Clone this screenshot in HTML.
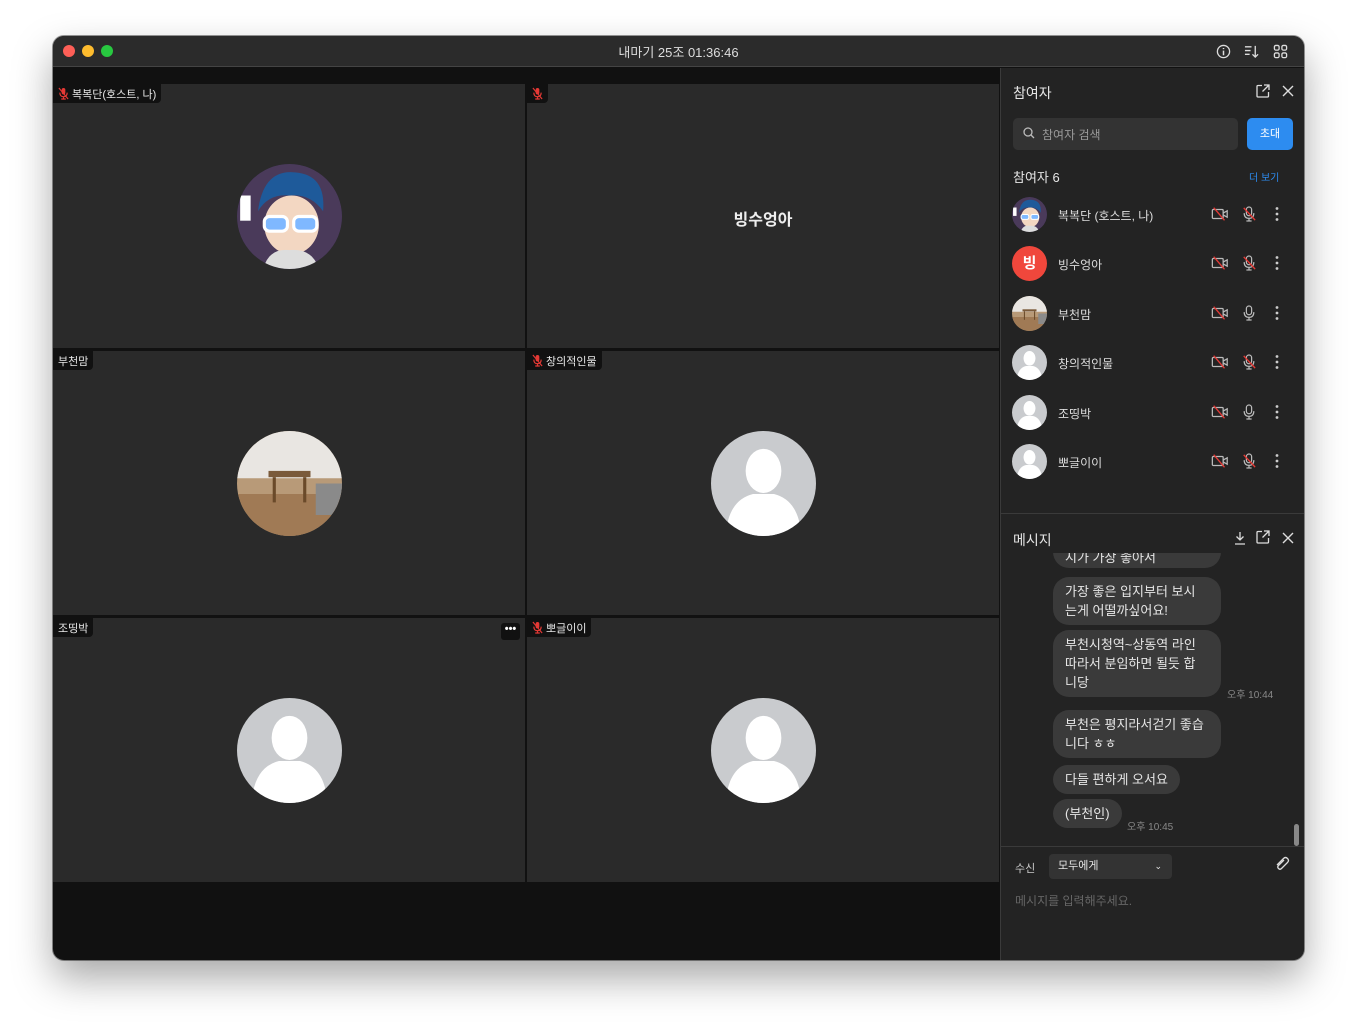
<!DOCTYPE html><html><head><meta charset="utf-8"><style>
*{margin:0;padding:0;box-sizing:border-box}
body{width:1357px;height:1030px;background:#fff;font-family:"Liberation Sans","Noto Sans CJK KR",sans-serif;position:relative;overflow:hidden}
.win{position:absolute;left:53px;top:36px;width:1251px;height:924px;border-radius:11px;background:#111;overflow:hidden;box-shadow:0 18px 40px rgba(0,0,0,.35),0 0 0 1px rgba(0,0,0,.4)}
.tb{position:absolute;left:0;top:0;width:100%;height:31px;background:#2b2b2b;border-bottom:1px solid #444}
.dot{position:absolute;top:9px;width:12px;height:12px;border-radius:50%}
.title{position:absolute;top:6px;left:0;width:100%;text-align:center;color:#ddd;font-size:13px}
.tile{position:absolute;background:#2a2a2a;width:472px;height:264px}
.lbl{position:absolute;left:0;top:0;background:#111;color:#e8e8e8;font-size:11px;padding:2px 5px;height:19px;border-radius:0 0 4px 0;display:flex;align-items:center;gap:3px}
.av{position:absolute;width:105px;height:105px;border-radius:50%;left:184px;top:80px;overflow:hidden}
.side{position:absolute;left:947px;top:32px;width:304px;height:892px;background:#232323;border-left:1px solid #3a3a3a}
.t{position:absolute;color:#e6e6e6}
.row{position:absolute;left:11px;width:285px;height:36px}
.row .a{position:absolute;left:0;top:0;width:35px;height:35px;border-radius:50%;overflow:hidden}
.row .n{position:absolute;left:46px;top:10px;font-size:12px;color:#ddd}
.row svg.ic{position:absolute;top:9px}
.bub{position:absolute;left:52px;background:#3a3a3a;color:#e6e6e6;font-size:13px;line-height:19px;border-radius:16px;padding:5px 12px}
.tm{position:absolute;color:#888;font-size:10px}
</style></head><body>
<svg width="0" height="0" style="position:absolute"><defs>
<symbol id="def" viewBox="0 0 100 100"><rect width="100" height="100" fill="#c9cbce"/><ellipse cx="50" cy="38" rx="17" ry="21" fill="#fff"/><path d="M14 100 Q16 66 40 60 L60 60 Q84 66 86 100Z" fill="#fff"/></symbol>
<symbol id="cam" viewBox="0 0 20 16"><rect x="1.5" y="3" width="12" height="10" rx="1" fill="none" stroke="#bbb" stroke-width="1.4"/><path d="M13.5 7 L18 4.5 V11.5 L13.5 9" fill="none" stroke="#bbb" stroke-width="1.4"/><path d="M3 1 L15 15" stroke="#e53935" stroke-width="1.5"/></symbol>
<symbol id="mic" viewBox="0 0 16 18"><rect x="5" y="1" width="6" height="10" rx="3" fill="none" stroke="#bbb" stroke-width="1.4"/><path d="M2.5 8 Q2.5 14 8 14 Q13.5 14 13.5 8 M8 14 V17 M5 17 H11" fill="none" stroke="#bbb" stroke-width="1.4"/></symbol>
<symbol id="micx" viewBox="0 0 16 18"><use href="#mic"/><path d="M2 2 L15 16" stroke="#e53935" stroke-width="1.5"/></symbol>
<symbol id="rmic" viewBox="0 0 12 14"><rect x="4" y="1" width="4" height="7" rx="2" fill="#e53935"/><path d="M2 6 Q2 10.5 6 10.5 Q10 10.5 10 6 M6 10.5 V13 M3.5 13 H8.5" fill="none" stroke="#e53935" stroke-width="1.3"/><path d="M1 1 L11 13" stroke="#e53935" stroke-width="1.3"/></symbol>
<symbol id="dots" viewBox="0 0 6 16"><circle cx="3" cy="2.5" r="1.4" fill="#ccc"/><circle cx="3" cy="8" r="1.4" fill="#ccc"/><circle cx="3" cy="13.5" r="1.4" fill="#ccc"/></symbol>
<symbol id="me" viewBox="0 0 100 100"><rect width="100" height="100" fill="#3b3050"/><circle cx="50" cy="50" r="50" fill="#4a3a5a"/><path d="M20 45 Q25 5 55 8 Q85 10 82 45 Q70 28 50 30 Q30 28 20 45Z" fill="#1e5a9a"/><ellipse cx="52" cy="58" rx="26" ry="28" fill="#f3d7c2"/><rect x="26" y="50" width="22" height="14" rx="5" fill="#7fb8ff" stroke="#fff" stroke-width="3"/><rect x="54" y="50" width="22" height="14" rx="5" fill="#7fb8ff" stroke="#fff" stroke-width="3"/><path d="M25 100 Q30 80 50 82 Q72 80 78 100Z" fill="#ddd"/><rect x="3" y="30" width="10" height="24" fill="#fff"/></symbol>
<symbol id="room" viewBox="0 0 100 100"><rect width="100" height="100" fill="#b89a78"/><rect width="100" height="45" fill="#e9e6e2"/><rect x="0" y="60" width="100" height="40" fill="#a07a55"/><rect x="30" y="38" width="40" height="6" fill="#7a5a3a"/><rect x="34" y="44" width="3" height="24" fill="#6a4a2a"/><rect x="63" y="44" width="3" height="24" fill="#6a4a2a"/><rect x="75" y="50" width="25" height="30" fill="#8a8a8a"/></symbol>
</defs></svg>
<div class="win">
<div class="tb"><div class="dot" style="left:10px;background:#fe5f57"></div><div class="dot" style="left:29px;background:#febc2e"></div><div class="dot" style="left:48px;background:#28c840"></div>
<div class="title">내마기 25조 01:36:46</div>
<svg style="position:absolute;left:1163px;top:8px" width="15" height="15" viewBox="0 0 16 16"><circle cx="8" cy="8" r="6.5" fill="none" stroke="#ddd" stroke-width="1.4"/><path d="M8 7 V12 M8 4.2 V5.4" stroke="#ddd" stroke-width="1.6"/></svg>
<svg style="position:absolute;left:1191px;top:8px" width="15" height="15" viewBox="0 0 16 16"><path d="M1 3 H8 M1 7 H7 M1 11 H6 M12 2 V14 M9 11 L12 14 L15 11" fill="none" stroke="#ddd" stroke-width="1.4"/></svg>
<svg style="position:absolute;left:1220px;top:8px" width="15" height="15" viewBox="0 0 16 16"><g fill="none" stroke="#ddd" stroke-width="1.4"><rect x="1.5" y="1.5" width="5" height="5" rx="1.5"/><rect x="9.5" y="1.5" width="5" height="5" rx="1.5"/><rect x="1.5" y="9.5" width="5" height="5" rx="1.5"/><rect x="9.5" y="9.5" width="5" height="5" rx="1.5"/></g></svg>
</div>
<div class="tile" style="left:0;top:48px"><div class="lbl"><svg width="11" height="13"><use href="#rmic"/></svg>복복단(호스트, 나)</div><svg class="av" viewBox="0 0 100 100"><use href="#me"/></svg></div>
<div class="tile" style="left:474px;top:48px"><div class="lbl"><svg width="11" height="13"><use href="#rmic"/></svg></div><div style="position:absolute;left:0;width:100%;top:122px;text-align:center;color:#eee;font-size:16px;font-weight:bold">빙수엉아</div></div>
<div class="tile" style="left:0;top:315px"><div class="lbl">부천맘</div><svg class="av" viewBox="0 0 100 100"><use href="#room"/></svg></div>
<div class="tile" style="left:474px;top:315px"><div class="lbl"><svg width="11" height="13"><use href="#rmic"/></svg>창의적인물</div><svg class="av" viewBox="0 0 100 100"><use href="#def"/></svg></div>
<div class="tile" style="left:0;top:582px"><div class="lbl">조띵박</div><div style="position:absolute;left:448px;top:5px;width:19px;height:17px;background:#111;border-radius:3px;color:#fff;font-size:11px;text-align:center;line-height:12px;font-weight:bold">•••</div><svg class="av" viewBox="0 0 100 100"><use href="#def"/></svg></div>
<div class="tile" style="left:474px;top:582px"><div class="lbl"><svg width="11" height="13"><use href="#rmic"/></svg>뽀글이이</div><svg class="av" viewBox="0 0 100 100"><use href="#def"/></svg></div>
<div class="side">
<div class="t" style="left:12px;top:15px;font-size:14px">참여자</div>
<svg style="position:absolute;left:255px;top:16px" width="14" height="14" viewBox="0 0 14 14"><path d="M6 1.5 H2 Q1 1.5 1 2.5 V12 Q1 13 2 13 H11.5 Q12.5 13 12.5 12 V8 M8 1 H13 V6 M13 1 L6.5 7.5" fill="none" stroke="#ddd" stroke-width="1.3"/></svg>
<svg style="position:absolute;left:281px;top:17px" width="12" height="12"><path d="M1 1 L11 11 M11 1 L1 11" stroke="#ddd" stroke-width="1.4"/></svg>
<div style="position:absolute;left:12px;top:50px;width:225px;height:32px;background:#333;border-radius:5px"></div>
<svg style="position:absolute;left:22px;top:59px" width="12" height="12"><circle cx="5" cy="5" r="4" fill="none" stroke="#bbb" stroke-width="1.3"/><path d="M8 8 L11 11" stroke="#bbb" stroke-width="1.3"/></svg>
<div class="t" style="left:41px;top:58px;font-size:12px;color:#999">참여자 검색</div>
<div style="position:absolute;left:246px;top:50px;width:46px;height:32px;background:#2d8cf0;border-radius:5px;color:#fff;font-size:11px;text-align:center;line-height:32px">초대</div>
<div class="t" style="left:12px;top:99px;font-size:13px">참여자 6</div>
<div class="t" style="left:248px;top:101px;font-size:10px;color:#2d8cf0">더 보기</div>
<div class="row" style="top:129px"><svg class="a" viewBox="0 0 100 100"><use href="#me"/></svg><div class="n">복복단 (호스트, 나)</div><svg class="ic" style="left:199px" width="18" height="16"><use href="#cam"/></svg><svg class="ic" style="left:230px;top:8px" width="14" height="18"><use href="#micx"/></svg><svg class="ic" style="left:262px" width="6" height="16"><use href="#dots"/></svg></div>
<div class="row" style="top:178px"><div class="a" style="background:#f0473c;color:#fff;font-weight:bold;font-size:15px;text-align:center;line-height:35px">빙</div><div class="n">빙수엉아</div><svg class="ic" style="left:199px" width="18" height="16"><use href="#cam"/></svg><svg class="ic" style="left:230px;top:8px" width="14" height="18"><use href="#micx"/></svg><svg class="ic" style="left:262px" width="6" height="16"><use href="#dots"/></svg></div>
<div class="row" style="top:228px"><svg class="a" viewBox="0 0 100 100"><use href="#room"/></svg><div class="n">부천맘</div><svg class="ic" style="left:199px" width="18" height="16"><use href="#cam"/></svg><svg class="ic" style="left:230px;top:8px" width="14" height="18"><use href="#mic"/></svg><svg class="ic" style="left:262px" width="6" height="16"><use href="#dots"/></svg></div>
<div class="row" style="top:277px"><svg class="a" viewBox="0 0 100 100"><use href="#def"/></svg><div class="n">창의적인물</div><svg class="ic" style="left:199px" width="18" height="16"><use href="#cam"/></svg><svg class="ic" style="left:230px;top:8px" width="14" height="18"><use href="#micx"/></svg><svg class="ic" style="left:262px" width="6" height="16"><use href="#dots"/></svg></div>
<div class="row" style="top:327px"><svg class="a" viewBox="0 0 100 100"><use href="#def"/></svg><div class="n">조띵박</div><svg class="ic" style="left:199px" width="18" height="16"><use href="#cam"/></svg><svg class="ic" style="left:230px;top:8px" width="14" height="18"><use href="#mic"/></svg><svg class="ic" style="left:262px" width="6" height="16"><use href="#dots"/></svg></div>
<div class="row" style="top:376px"><svg class="a" viewBox="0 0 100 100"><use href="#def"/></svg><div class="n">뽀글이이</div><svg class="ic" style="left:199px" width="18" height="16"><use href="#cam"/></svg><svg class="ic" style="left:230px;top:8px" width="14" height="18"><use href="#micx"/></svg><svg class="ic" style="left:262px" width="6" height="16"><use href="#dots"/></svg></div>
<div style="position:absolute;left:0;top:445px;width:100%;height:1px;background:#3a3a3a"></div>
<div class="bub" style="top:464px;width:168px;height:36px;padding-top:16px">시가 가장 좋아서</div>
<div class="bub" style="top:509px;width:168px">가장 좋은 입지부터 보시<br>는게 어떨까싶어요!</div>
<div class="bub" style="top:562px;width:168px">부천시청역~상동역 라인<br>따라서 분임하면 될듯 합<br>니당</div>
<div class="tm" style="left:226px;top:618px">오후 10:44</div>
<div class="bub" style="top:642px;width:168px">부천은 평지라서걷기 좋습<br>니다 ㅎㅎ</div>
<div class="bub" style="top:697px">다들 편하게 오서요</div>
<div class="bub" style="top:731px">(부천인)</div>
<div class="tm" style="left:126px;top:750px">오후 10:45</div>
<div style="position:absolute;left:0;top:452px;width:100%;height:33px;background:#232323"></div>
<div class="t" style="left:12px;top:462px;font-size:14px">메시지</div>
<svg style="position:absolute;left:232px;top:463px" width="14" height="14"><path d="M7 1 V9 M3.5 5.5 L7 9 L10.5 5.5 M2 13 H12" fill="none" stroke="#ddd" stroke-width="1.3"/></svg>
<svg style="position:absolute;left:255px;top:462px" width="14" height="14" viewBox="0 0 14 14"><path d="M6 1.5 H2 Q1 1.5 1 2.5 V12 Q1 13 2 13 H11.5 Q12.5 13 12.5 12 V8 M8 1 H13 V6 M13 1 L6.5 7.5" fill="none" stroke="#ddd" stroke-width="1.3"/></svg>
<svg style="position:absolute;left:281px;top:464px" width="12" height="12"><path d="M1 1 L11 11 M11 1 L1 11" stroke="#ddd" stroke-width="1.4"/></svg>
<div style="position:absolute;left:293px;top:756px;width:5px;height:22px;background:#888;border-radius:3px"></div>
<div style="position:absolute;left:0;top:778px;width:100%;height:1px;background:#3a3a3a"></div>
<div class="t" style="left:14px;top:792px;font-size:11px;color:#ccc">수신</div>
<div style="position:absolute;left:48px;top:786px;width:123px;height:25px;background:#333;border-radius:4px;color:#e6e6e6;font-size:11px;line-height:25px;padding-left:9px">모두에게<span style="position:absolute;right:10px;font-size:9px">⌄</span></div>
<svg style="position:absolute;left:273px;top:788px" width="16" height="16" viewBox="0 0 16 16"><path d="M10 4 L4.5 9.5 Q3 11 4.5 12.5 Q6 14 7.5 12.5 L13.5 6.5 Q15.5 4.5 13.5 2.5 Q11.5 0.5 9.5 2.5 L3 9" fill="none" stroke="#ddd" stroke-width="1.3"/></svg>
<div class="t" style="left:14px;top:824px;font-size:12px;color:#666">메시지를 입력해주세요.</div>
</div>
</div>
</body></html>
